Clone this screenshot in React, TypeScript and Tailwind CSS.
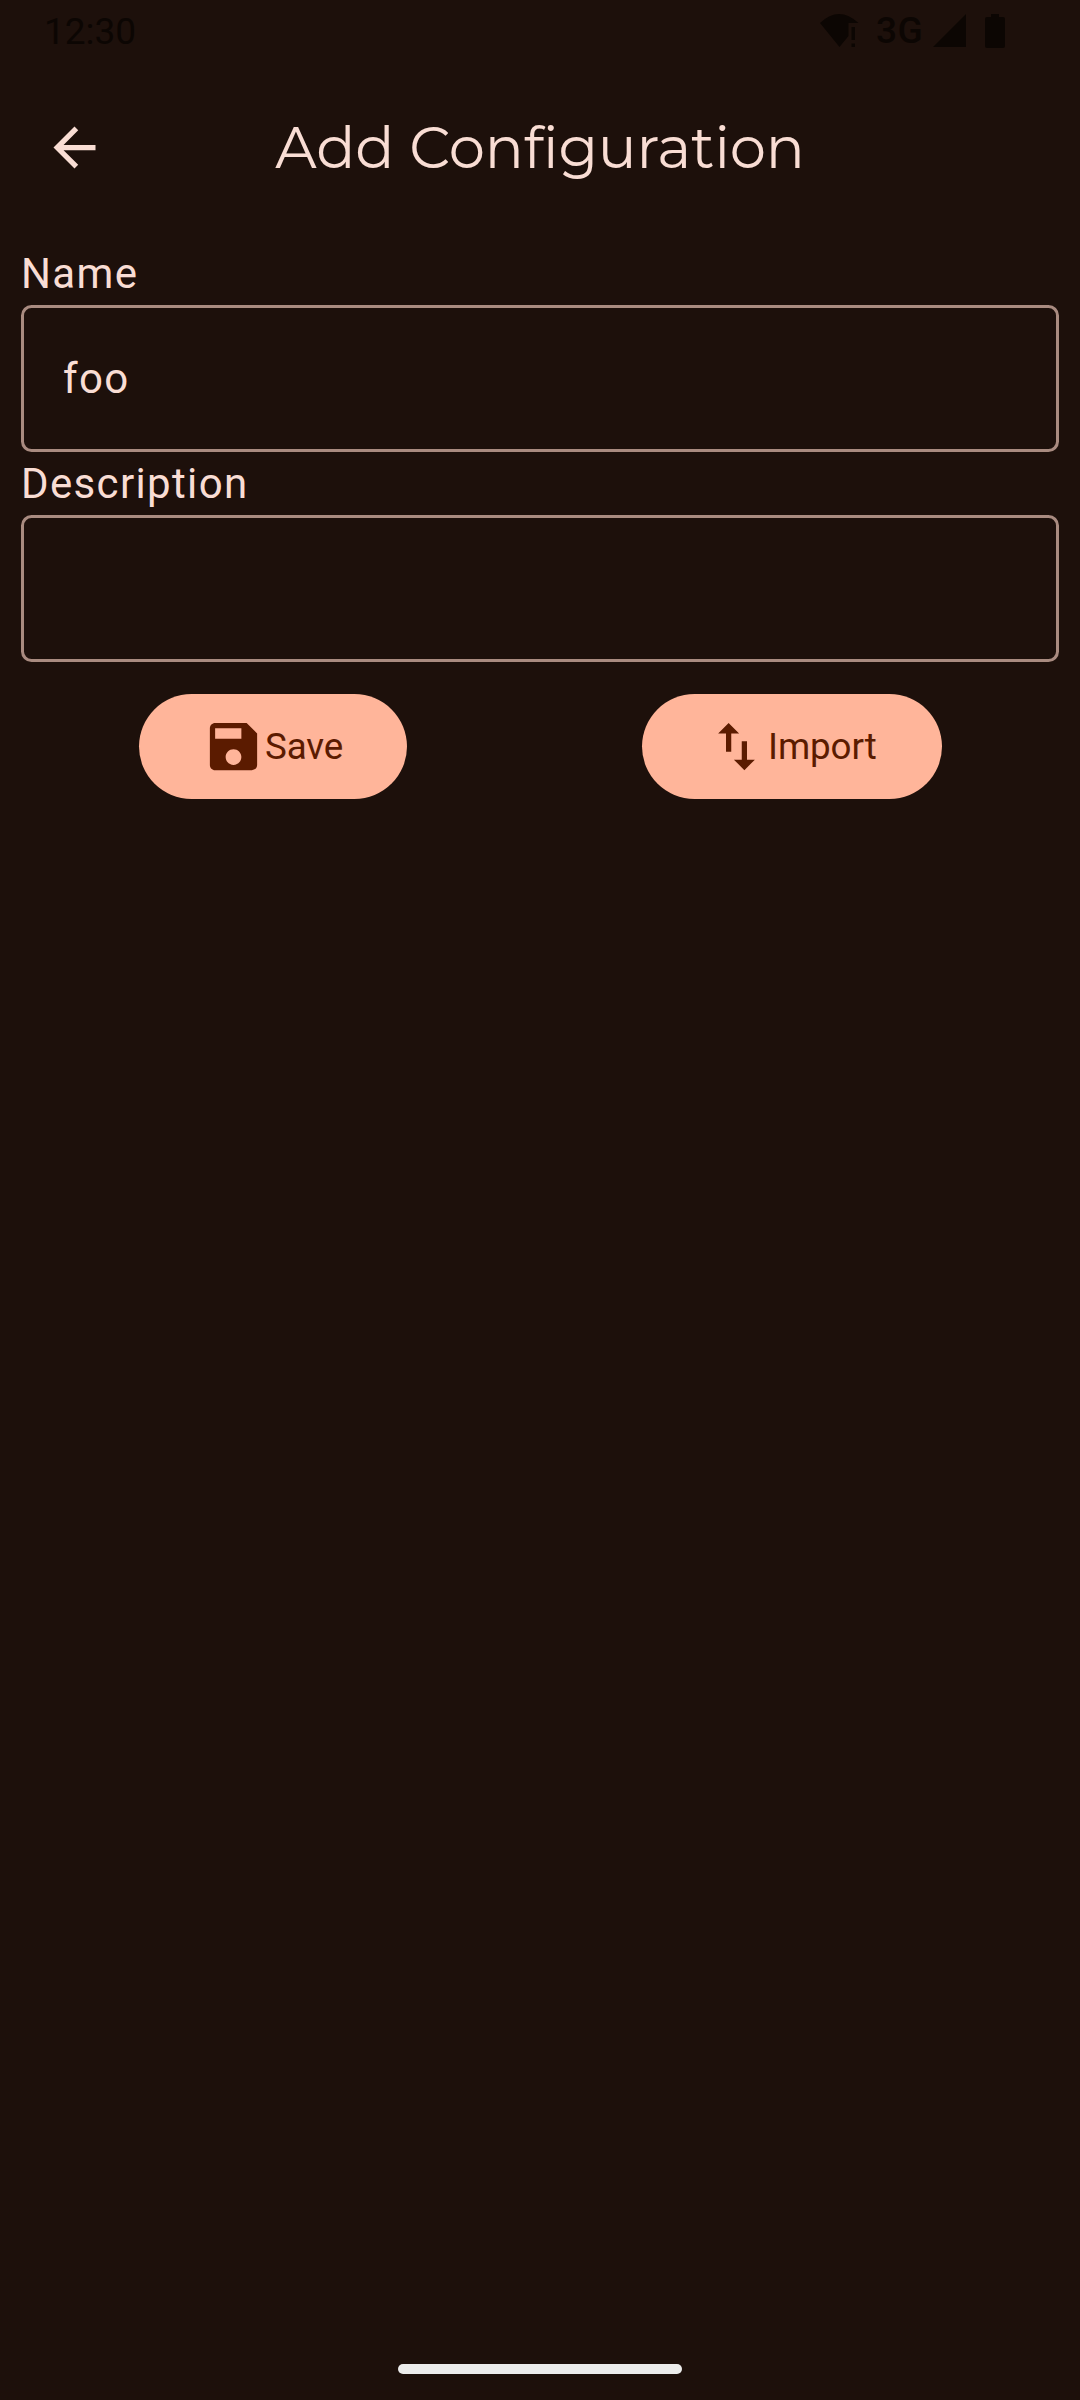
import React from "react";

function StatusBar() {
  return (
    <div className="flex h-[62px] items-start text-[#0c0603]">
      <span className="ml-[44px] mt-[9.500px] w-[776px] text-[37px] leading-[44px]">12:30</span>
      <svg className="mt-[14px] h-[34px] w-[39px] shrink-0" viewBox="0 0 39 34" fill="currentColor">
        <path d="M0 9Q19-9 38.500 9H28.500V22L19.500 33Z" />
        <path d="M31.500 13H35V26H31.500ZM31.500 29.500H35V33H31.500Z" />
      </svg>
      <span className="ml-[17px] mt-[9px] w-[57px] text-[37px] font-medium leading-[44px] tracking-[0.5px]">3G</span>
      <svg className="mt-[14px] h-[33px] w-[33px] shrink-0" viewBox="0 0 33 33" fill="currentColor">
        <path d="M0 33L33 0V33Z" />
      </svg>
      <svg className="ml-[19px] mt-[14px] h-[34px] w-5 shrink-0" viewBox="0 0 20 34" fill="currentColor">
        <path d="M6 0H14V3H18Q20 3 20 5V32Q20 34 18 34H2Q0 34 0 32V5Q0 3 2 3H6Z" />
      </svg>
    </div>
  );
}

function Header() {
  return (
    <header className="grid h-[172px] grid-cols-[148px_1fr_148px] items-center pb-[1px]">
      <button aria-label="Back" className="ml-[43px] size-[63px]">
        <svg viewBox="0 0 24 24" className="size-full" fill="currentColor">
          <path d="M20 11H7.830l5.590-5.590L12 4l-8 8 8 8 1.410-1.410L7.830 13H20v-2z" />
        </svg>
      </button>
      <h1 className="whitespace-nowrap pb-[2px] text-center font-['Montserrat','Lato',sans-serif] text-[57.750px] leading-[74px] tracking-[-0.15px]">
        Add Configuration
      </h1>
    </header>
  );
}

function Field({ label, value }: { label: string; value: string }) {
  return (
    <label className="flex h-[210px] flex-col text-[42px] tracking-[1.35px]">
      <span className="h-[63px] leading-[63px]">{label}</span>
      <input
        defaultValue={value}
        className="h-[147px] w-full rounded-[10.500px] border-[3px] border-[#a98b80] bg-transparent px-[39px] tracking-[1.4px] outline-none"
      />
    </label>
  );
}

function ActionButton({ label, path, className }: { label: string; path: string; className: string }) {
  return (
    <button className={`flex h-[105px] items-center rounded-full bg-[#ffb59a] pl-[63px] text-[36.750px] text-[#5b1b00] ${className}`}>
      <svg viewBox="0 0 24 24" className="size-[63px] shrink-0" fill="currentColor">
        <path d={path} />
      </svg>
      <span className="pl-[0.5px] leading-[52px] tracking-[-0.1px]">{label}</span>
    </button>
  );
}

export default function App() {
  return (
    <div className="flex h-[2400px] w-[1080px] flex-col overflow-hidden bg-[#1d100b] font-['Roboto',sans-serif] text-[#f9ddd4]">
      <StatusBar />
      <Header />
      <main className="flex flex-1 flex-col px-[21px] pt-[8px]">
        <Field label="Name" value="foo" />
        <Field label="Description" value="" />
        <div className="mt-8 flex justify-around">
          <ActionButton
            label="Save"
            className="w-[268px]"
            path="M17 3H5c-1.110 0-2 .9-2 2v14c0 1.100.89 2 2 2h14c1.100 0 2-.9 2-2V7l-4-4zm-5 16c-1.660 0-3-1.340-3-3s1.340-3 3-3 3 1.340 3 3-1.340 3-3 3zm3-10H5V5h10v4z"
          />
          <ActionButton
            label="Import"
            className="w-[300px]"
            path="M9 3L5 7h3v7h2V7h3L9 3zm7 14v-7h-2v7h-3l4 4 4-4h-3z"
          />
        </div>
      </main>
      <div className="mx-auto mb-[26px] h-[10px] w-[284px] rounded-full bg-[#ececec]" />
    </div>
  );
}
